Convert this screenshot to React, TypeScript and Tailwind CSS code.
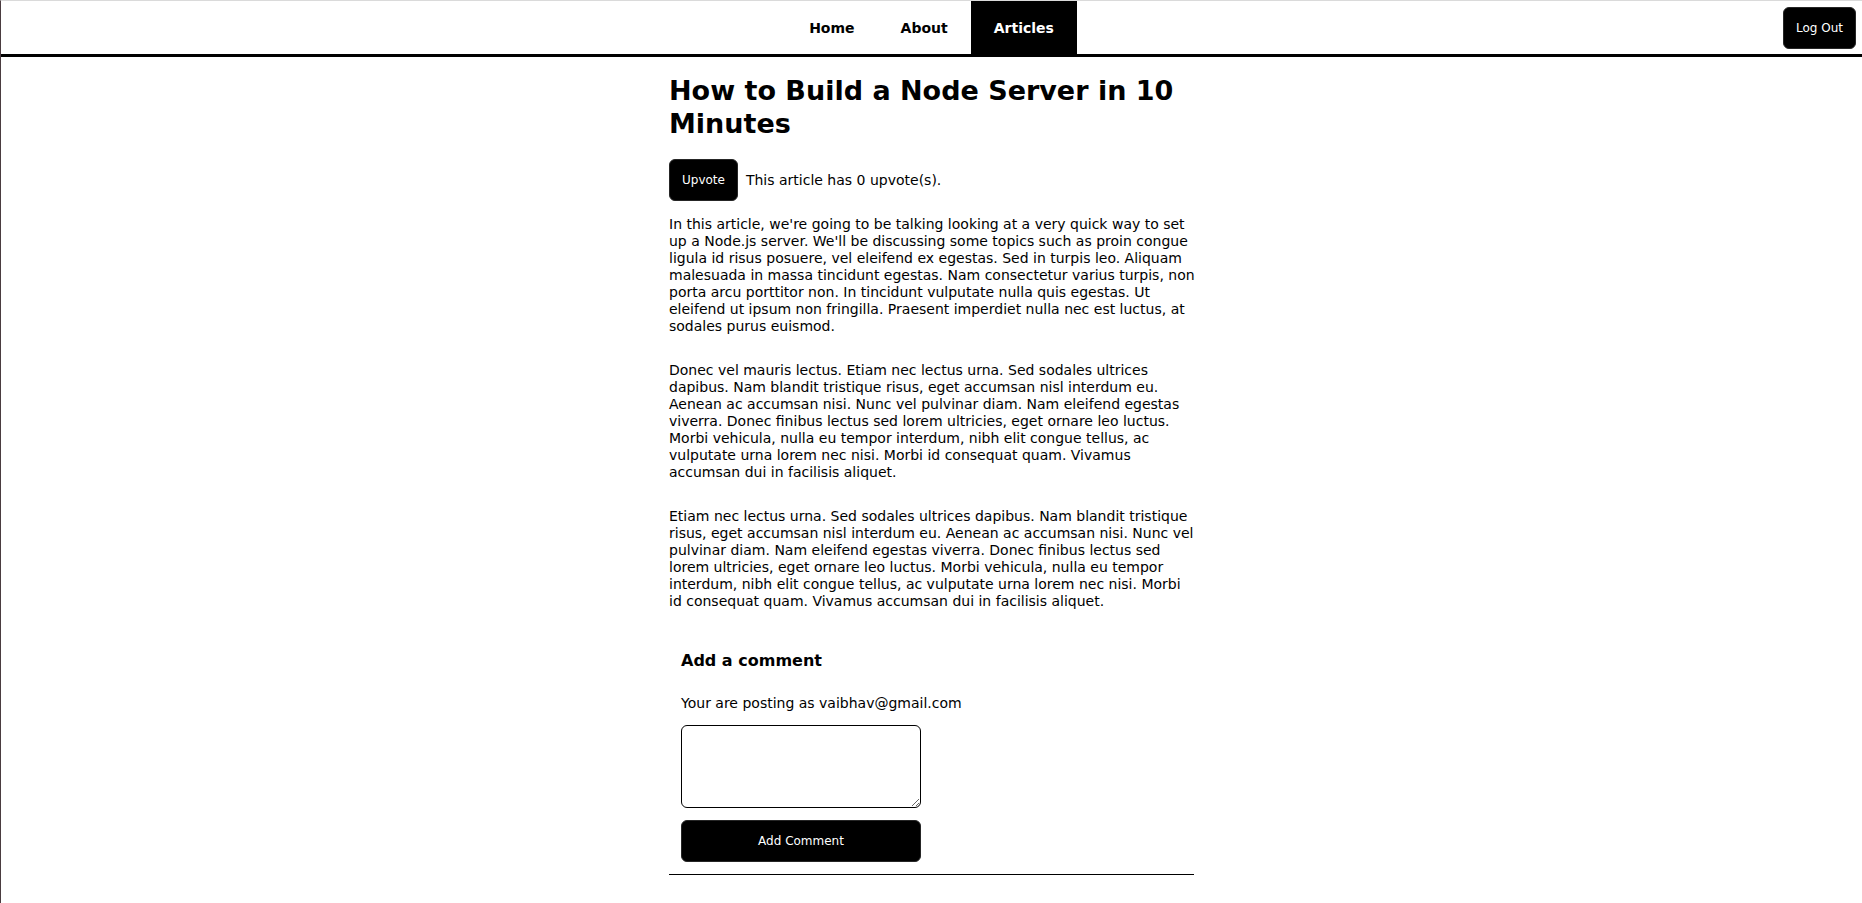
const paragraphs = [
  "In this article, we're going to be talking looking at a very quick way to set up a Node.js server. We'll be discussing some topics such as proin congue ligula id risus posuere, vel eleifend ex egestas. Sed in turpis leo. Aliquam malesuada in massa tincidunt egestas. Nam consectetur varius turpis, non porta arcu porttitor non. In tincidunt vulputate nulla quis egestas. Ut eleifend ut ipsum non fringilla. Praesent imperdiet nulla nec est luctus, at sodales purus euismod.",
  "Donec vel mauris lectus. Etiam nec lectus urna. Sed sodales ultrices dapibus. Nam blandit tristique risus, eget accumsan nisl interdum eu. Aenean ac accumsan nisi. Nunc vel pulvinar diam. Nam eleifend egestas viverra. Donec finibus lectus sed lorem ultricies, eget ornare leo luctus. Morbi vehicula, nulla eu tempor interdum, nibh elit congue tellus, ac vulputate urna lorem nec nisi. Morbi id consequat quam. Vivamus accumsan dui in facilisis aliquet.",
  "Etiam nec lectus urna. Sed sodales ultrices dapibus. Nam blandit tristique risus, eget accumsan nisl interdum eu. Aenean ac accumsan nisi. Nunc vel pulvinar diam. Nam eleifend egestas viverra. Donec finibus lectus sed lorem ultricies, eget ornare leo luctus. Morbi vehicula, nulla eu tempor interdum, nibh elit congue tellus, ac vulputate urna lorem nec nisi. Morbi id consequat quam. Vivamus accumsan dui in facilisis aliquet.",
];

const button = "rounded-md border border-neutral-800 bg-black px-3 py-3 text-xs leading-4 text-white";
const link = "px-[23px] pt-[19px] pb-[17px]";

export default function App() {
  return (
    <div className="min-h-screen border-t border-l border-t-[#dadada] border-l-[#4a3c40] bg-white font-['DejaVu_Sans',sans-serif] text-sm leading-[17px] text-black">
      <header className="grid grid-cols-[1fr_auto_1fr] items-center border-b-[3px] border-black">
        <nav className="col-start-2 flex font-bold">
          <a href="#home" className={link}>Home</a>
          <a href="#about" className={link}>About</a>
          <a href="#articles" className={`${link} bg-black text-white`}>Articles</a>
        </nav>
        <button type="button" className={`${button} mr-1.5 justify-self-end`}>Log Out</button>
      </header>
      <main className="mx-auto max-w-[525px] pt-[17px]">
        <h1 className="text-[27px] leading-[33px] font-bold">How to Build a Node Server in 10 Minutes</h1>
        <div className="mt-[19px] flex items-center gap-2">
          <button type="button" className={button}>Upvote</button>
          <p>This article has 0 upvote(s).</p>
        </div>
        <div className="-mr-0.5 mt-[15px] flex flex-col gap-[27px]">
          {paragraphs.map((text) => <p key={text}>{text}</p>)}
        </div>
        <form className="mt-[27px] border-b border-black p-3">
          <h2 className="text-base leading-6 font-bold">Add a comment</h2>
          <label htmlFor="comment" className="mt-[22px] block">Your are posting as vaibhav@gmail.com</label>
          <textarea id="comment" className="mt-[13px] block h-[83px] w-60 rounded-md border border-black" />
          <button type="button" className={`${button} mt-3 block w-60`}>Add Comment</button>
        </form>
      </main>
    </div>
  );
}
